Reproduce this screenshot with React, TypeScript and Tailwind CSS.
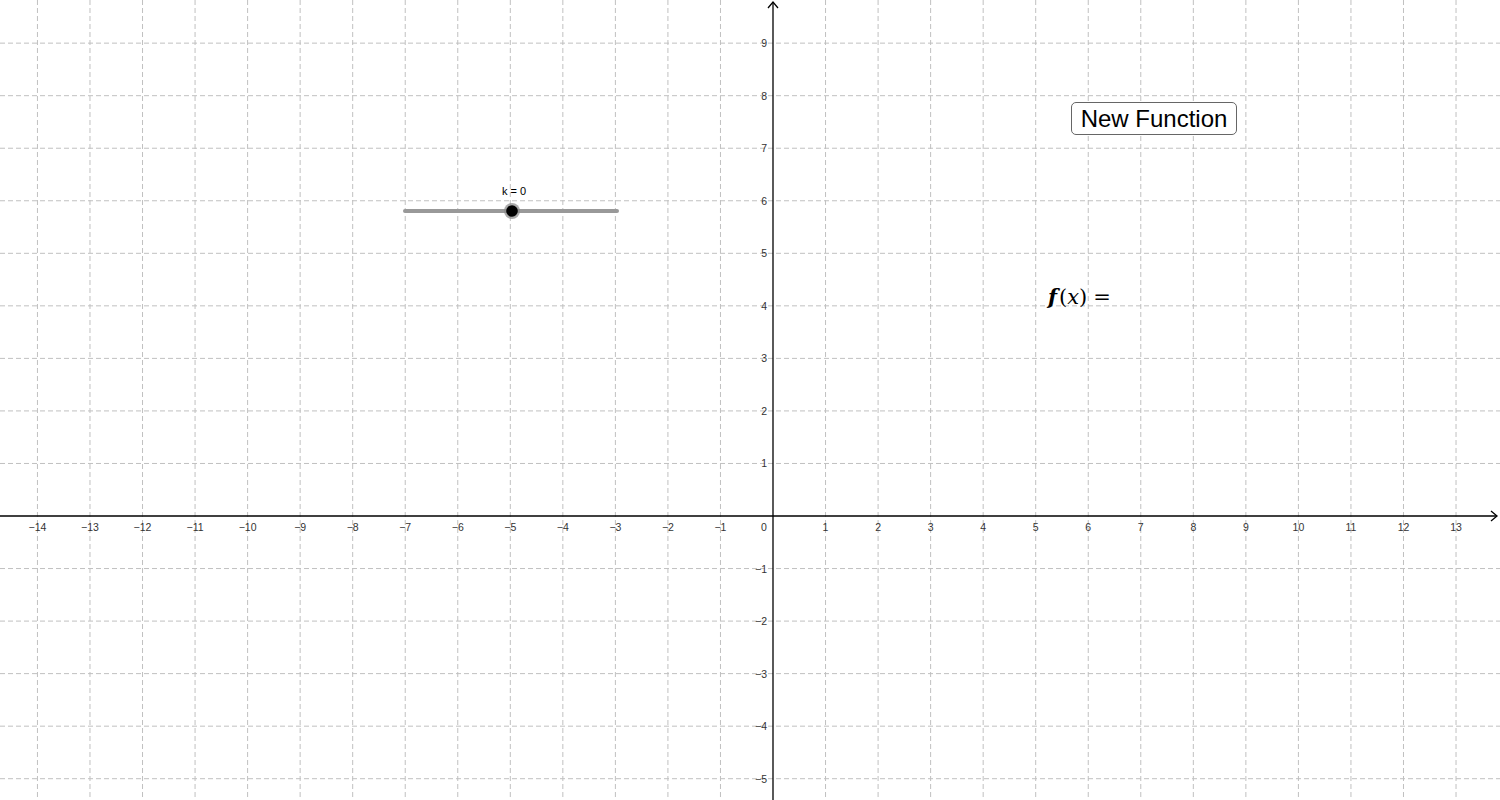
import React from 'react';

const U = 52.54;
const OX = 773;
const OY = 516;

const xs = Array.from({ length: 28 }, (_, i) => i - 14);
const ys = Array.from({ length: 15 }, (_, i) => i - 5);

const fmt = (n: number) => (n < 0 ? '\u2212' + Math.abs(n) : String(n));

const Graph = () => (
  <svg width={1500} height={800} className="block" style={{ fontFamily: '"Liberation Sans", Arial, sans-serif' }}>
    {/* grid */}
    <g stroke="#c0c0c0" strokeWidth={1} strokeDasharray="5,3">
      {xs.map((i) => (i === 0 ? null : <line key={'gx' + i} x1={OX + i * U} y1={0} x2={OX + i * U} y2={800} />))}
      {ys.map((j) => (j === 0 ? null : <line key={'gy' + j} x1={0} y1={OY - j * U} x2={1500} y2={OY - j * U} />))}
    </g>

    {/* axes */}
    <g stroke="#000" strokeWidth={1.3} fill="none">
      <line x1={0} y1={OY} x2={1497} y2={OY} />
      <line x1={OX} y1={800} x2={OX} y2={2} />
      <polyline points="1491,511 1497,516 1491,521" />
      <polyline points="768,8 773,2 778,8" />
    </g>

    {/* x labels */}
    <g fontSize={10.5} fill="#333" textAnchor="middle">
      {xs.map((i) =>
        i === 0 ? null : (
          <text key={'lx' + i} x={OX + i * U} y={531}>
            {fmt(i)}
          </text>
        )
      )}
      <text x={764} y={531}>0</text>
    </g>

    {/* y labels */}
    <g fontSize={10.5} fill="#333" textAnchor="end">
      {ys.map((j) =>
        j === 0 ? null : (
          <text key={'ly' + j} x={767} y={OY - j * U + 4}>
            {fmt(j)}
          </text>
        )
      )}
    </g>

    {/* slider k */}
    <line x1={405} y1={211} x2={617} y2={211} stroke="#999" strokeWidth={4} strokeLinecap="round" />
    <circle cx={512} cy={211} r={8} fill="#888" opacity={0.7} />
    <circle cx={512} cy={211} r={5.8} fill="#000" />
    <text x={514} y={195} fontSize={11} fill="#000" textAnchor="middle">
      k = 0
    </text>
  </svg>
);

export default function App() {
  return (
    <div className="relative w-[1500px] h-[800px] overflow-hidden bg-white">
      <Graph />
      <button className="absolute left-[1071px] top-[102px] w-[166px] h-[33px] rounded-[5px] border border-[#666] bg-white text-[24px] leading-none text-black font-['Liberation_Sans',Arial,sans-serif]">
        New Function
      </button>
      <div className="absolute left-[1048px] top-[281px] flex items-baseline text-[21px] text-black font-['DejaVu_Serif','Liberation_Serif',serif]">
        <span className="italic font-bold">f</span>
        <span className="ml-[2px]">(</span>
        <span className="italic">x</span>
        <span>)</span>
        <span className="ml-[6px]">=</span>
      </div>
    </div>
  );
}
